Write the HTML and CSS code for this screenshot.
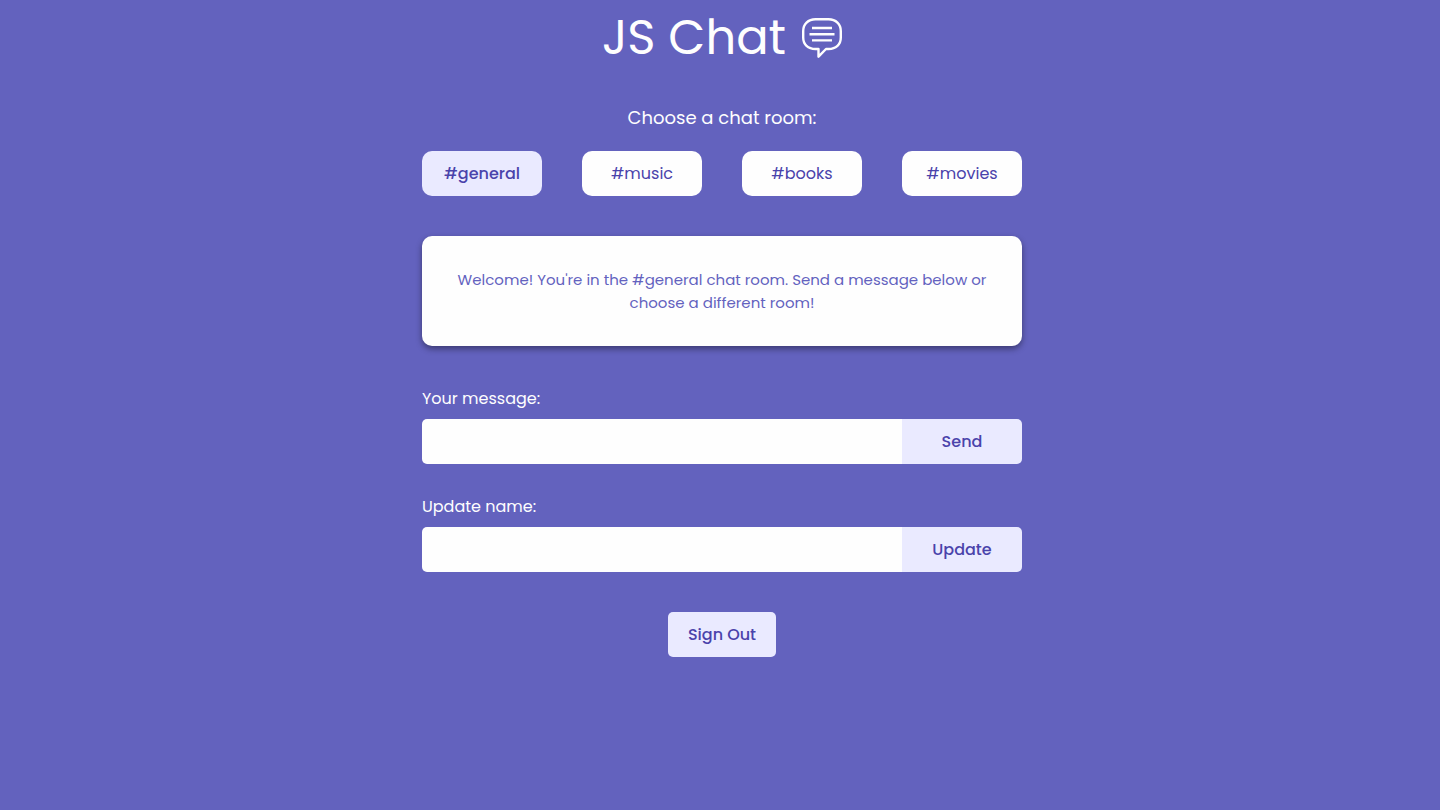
FILE: index.html
```html
<!DOCTYPE html>
<html lang="en">
<head>
  <meta charset="utf-8">
  <meta name="viewport" content="width=device-width, initial-scale=1">
  <title>JS Chat</title>
  <link rel="stylesheet" href="styles.css">
</head>
<body>
  <main class="page">
    <header class="header">
      <h1 class="title">JS Chat</h1>
      <svg class="logo" viewBox="0 0 40 40" aria-hidden="true">
        <path d="M13.5 1.2h13C34 1.2 38.8 6.200 38.800 13v6.500C38.800 26.500 34 31 26.500 31h-2.500L16.500 38.700V31h-3C6 31 1.200 26.500 1.200 19.500V13C1.200 6.200 6 1.200 13.500 1.200Z"/>
        <path d="M10 10h20M7.500 16.200h25M10 22.400h20"/>
      </svg>
    </header>

    <h2 class="prompt">Choose a chat room:</h2>
    <nav class="rooms" aria-label="Chat rooms">
      <button class="room room-active" type="button">#general</button>
      <button class="room" type="button">#music</button>
      <button class="room" type="button">#books</button>
      <button class="room" type="button">#movies</button>
    </nav>

    <section class="chat">
      <p class="welcome">Welcome! You're in the #general chat room. Send a message below or choose a different room!</p>
    </section>

    <form class="form">
      <label class="label" for="message">Your message:</label>
      <div class="field">
        <input class="input" id="message" type="text">
        <button class="button submit" type="button">Send</button>
      </div>
    </form>

    <form class="form">
      <label class="label" for="name">Update name:</label>
      <div class="field">
        <input class="input" id="name" type="text">
        <button class="button submit" type="button">Update</button>
      </div>
    </form>

    <button class="button sign-out" type="button">Sign Out</button>
  </main>
</body>
</html>
```

FILE: styles.css
```css
* {
  box-sizing: border-box;
  margin: 0;
}

body {
  background: #6362be;
  color: #fefefe;
  font-family: Poppins, Inter, sans-serif;
  font-size: 16px;
}

button,
input {
  border: 0;
  padding: 0;
  color: #4a43ab;
  font: inherit;
}

button {
  cursor: pointer;
}

.page {
  display: flex;
  flex-direction: column;
  align-items: center;
  width: 100%;
  max-width: 604px;
  margin: 0 auto;
  padding-left: 4px;
}

.header {
  display: flex;
  align-items: center;
  gap: 16px;
  height: 76px;
}

.title {
  font-size: 48px;
  font-weight: 400;
  line-height: 76px;
}

.logo {
  width: 40px;
  height: 40px;
  fill: none;
  stroke: #fefefe;
  stroke-width: 2.4;
  stroke-linejoin: round;
}

.prompt {
  margin-top: 28px;
  font-size: 18px;
  font-weight: 400;
  line-height: 28px;
}

.rooms {
  display: grid;
  grid-template-columns: repeat(4, 1fr);
  gap: 40px;
  width: 100%;
  margin-top: 19px;
}

.room {
  height: 45px;
  border-radius: 10px;
  background: #fefefe;
  font-weight: 400;
}

.room-active {
  background: #eaeaff;
  font-weight: 500;
}

.chat {
  width: 100%;
  margin-top: 40px;
  padding: 32px 30px;
  border-radius: 10px;
  background: #fefefe;
  box-shadow: 0 3px 6px rgba(0, 0, 0, 0.4);
}

.welcome {
  color: #6362be;
  font-size: 15px;
  font-weight: 400;
  line-height: 23px;
  text-align: center;
}

.form {
  width: 100%;
  margin-top: 41px;
}

.form + .form {
  margin-top: 31px;
}

.label {
  display: block;
  line-height: 24px;
}

.field {
  display: flex;
  height: 45px;
  margin-top: 8px;
  overflow: hidden;
  border-radius: 5px;
}

.input {
  flex: 1;
  min-width: 0;
  padding: 0 20px;
  background: #fefefe;
}

.button {
  background: #eaeaff;
  font-weight: 500;
}

.submit {
  width: 120px;
}

.sign-out {
  height: 45px;
  margin-top: 40px;
  padding: 0 20px;
  border-radius: 5px;
}
```
